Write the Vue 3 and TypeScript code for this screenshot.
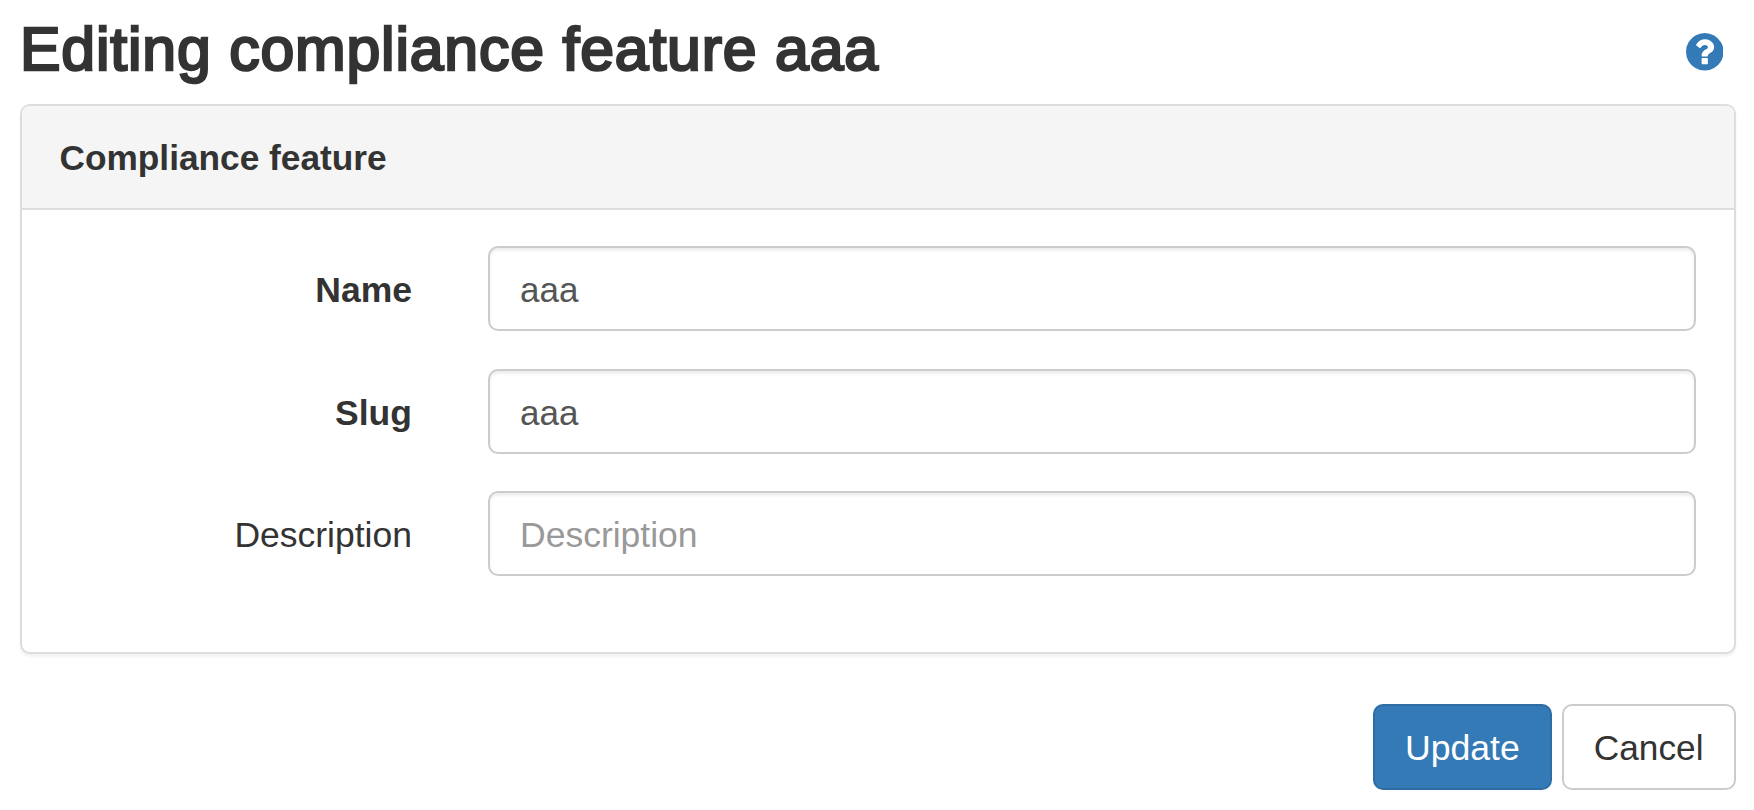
<script setup lang="ts">
interface Field {
  label: string;
  value: string;
  placeholder: string;
  required: boolean;
}

const fields: Field[] = [
  { label: "Name", value: "aaa", placeholder: "Name", required: true },
  { label: "Slug", value: "aaa", placeholder: "Slug", required: true },
  { label: "Description", value: "", placeholder: "Description", required: false },
];
</script>

<template>
  <div class="page">
    <header class="title-row">
      <h1 class="title">Editing compliance feature aaa</h1>
      <svg class="help" viewBox="128 128 1536 1536" aria-label="Help">
        <path
          d="M1024 1376v-192q0-14-9-23t-23-9h-192q-14 0-23 9t-9 23v192q0 14 9 23t23 9h192q14 0 23-9t9-23zm256-672q0-88-55.5-163t-138.5-116-170-41q-243 0-371 213-15 24 8 42l132 100q7 6 19 6 16 0 25-12 53-68 86-92 34-24 86-24 48 0 85.5 26t37.5 59q0 38-20 61t-68 45q-63 28-115.5 86.5t-52.5 125.5v36q0 14 9 23t23 9h192q14 0 23-9t9-23q0-19 21.5-49.5t54.5-49.5q32-18 49-28.5t46-35 44.5-48 28-60.5 12.5-81zm384 192q0 209-103 385.5t-279.5 279.5-385.5 103-385.5-103-279.5-279.5-103-385.5 103-385.5 279.5-279.5 385.5-103 385.5 103 279.5 279.5 103 385.5z"
        />
      </svg>
    </header>

    <section class="panel">
      <div class="panel-heading">Compliance feature</div>
      <div class="panel-body">
        <div v-for="field in fields" :key="field.label" class="form-group">
          <label class="label" :class="{ required: field.required }">{{ field.label }}</label>
          <input class="input" type="text" :value="field.value" :placeholder="field.placeholder" />
        </div>
      </div>
    </section>

    <div class="actions">
      <button class="btn primary" type="button">Update</button>
      <button class="btn" type="button">Cancel</button>
    </div>
  </div>
</template>

<style scoped>
.page {
  zoom: 2.5;
  padding: 0 7.4px 0 8px;
  font-family: "Liberation Sans", Arial, sans-serif;
  font-size: 14px;
  line-height: 20px;
  color: #333;
}
.title-row {
  height: 41.6px;
  display: flex;
  align-items: center;
  justify-content: space-between;
  padding-right: 5px;
}
.title {
  margin: 0;
  padding-bottom: 2px;
  font-size: 24.3px;
  line-height: 26px;
  font-weight: 400;
  letter-spacing: 0.33px;
  -webkit-text-stroke: 1px #333;
  color: #333;
}
.help {
  width: 15px;
  height: 15px;
  fill: #337ab7;
}
.panel {
  background: #fff;
  border: 1px solid #ddd;
  border-radius: 4px;
  box-shadow: 0 1px 1px rgba(0, 0, 0, 0.05);
}
.panel-heading {
  padding: 10.6px 15px 10px;
  background: #f5f5f5;
  border-bottom: 1px solid #ddd;
  border-radius: 3px 3px 0 0;
  font-size: 14.1px;
  font-weight: 700;
}
.panel-body {
  padding: 14.7px 15px 15.3px;
}
.form-group {
  display: grid;
  grid-template-columns: 141px 1fr;
  column-gap: 30.4px;
  margin-bottom: 15px;
}
.label {
  padding-top: 7.5px;
  font-size: 14.2px;
  text-align: right;
}
.required {
  font-weight: 700;
}
.input {
  box-sizing: border-box;
  width: 100%;
  height: 34px;
  padding: 6.6px 12px 5.4px;
  border: 1px solid #ccc;
  border-radius: 4px;
  background: #fff;
  box-shadow: inset 0 1px 1px rgba(0, 0, 0, 0.075);
  color: #555;
  font: inherit;
  outline: none;
}
.input::placeholder {
  color: #999;
  opacity: 1;
  font-size: 14.2px;
}
.actions {
  display: flex;
  justify-content: flex-end;
  gap: 4px;
  margin-top: 20px;
}
.btn {
  box-sizing: border-box;
  height: 34.2px;
  padding: 6.4px 12px 5.6px;
  border: 1px solid #ccc;
  border-radius: 4px;
  background: #fff;
  color: #333;
  font: inherit;
  font-size: 14.1px;
}
.primary {
  background: #337ab7;
  border-color: #2e6da4;
  color: #fff;
  font-size: 14.25px;
}
</style>
